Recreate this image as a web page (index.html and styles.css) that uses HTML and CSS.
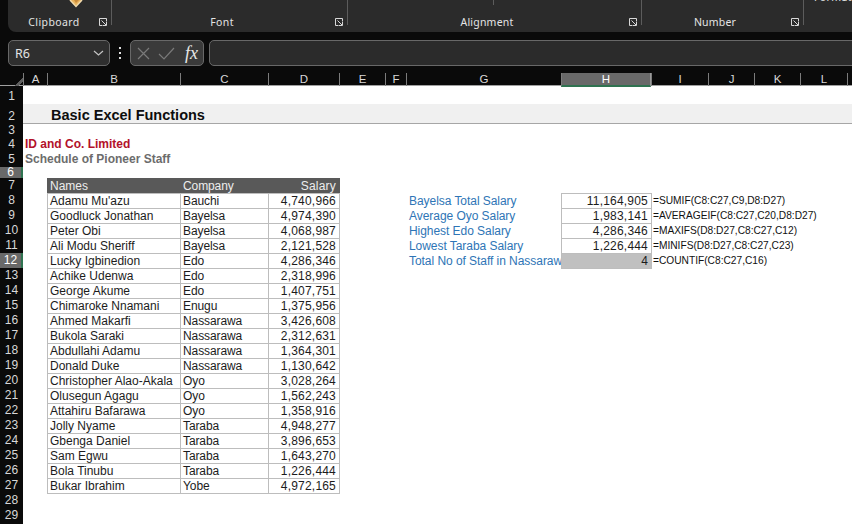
FILE: index.html
```html
<!DOCTYPE html>
<html lang="en">

<head>
    <meta charset="UTF-8">
    <meta name="viewport" content="width=device-width, initial-scale=1.0">
    <title>Basic Excel Functions</title>
    <link rel="stylesheet" href="styles.css">
</head>

<body>
    <div class="ribbon">
        <div class="group group-clipboard">
            <svg class="paste-icon" width="14" height="8" viewBox="0 0 14 8">
                <path d="M1 0 L7 6 L13 0 Z" fill="#e9b35c" />
                <path d="M1 0 L7 6.5 L13 0" fill="none" stroke="#f3dcae" stroke-width="1.5" />
                <path d="M5 0 L7 3 L10 0 Z" fill="#c98a3a" />
            </svg>
            <span class="group-label">Clipboard</span>
            <svg class="launcher" width="8" height="8" viewBox="0 0 8 8">
                <path d="M7.5 3.5 V0.5 H0.5 V7.5 H3.5 M2.5 2.5 L7 7 M7.5 4 V7.5 H4" fill="none" stroke="#d8d8d8" />
            </svg>
        </div>
        <div class="group group-font">
            <span class="group-label">Font</span>
            <svg class="launcher" width="8" height="8" viewBox="0 0 8 8">
                <path d="M7.5 3.5 V0.5 H0.5 V7.5 H3.5 M2.5 2.5 L7 7 M7.5 4 V7.5 H4" fill="none" stroke="#d8d8d8" />
            </svg>
        </div>
        <div class="group group-align">
            <i class="stub-line"></i>
            <span class="group-label">Alignment</span>
            <svg class="launcher" width="8" height="8" viewBox="0 0 8 8">
                <path d="M7.5 3.5 V0.5 H0.5 V7.5 H3.5 M2.5 2.5 L7 7 M7.5 4 V7.5 H4" fill="none" stroke="#d8d8d8" />
            </svg>
        </div>
        <div class="group group-number">
            <span class="group-label">Number</span>
            <svg class="launcher" width="8" height="8" viewBox="0 0 8 8">
                <path d="M7.5 3.5 V0.5 H0.5 V7.5 H3.5 M2.5 2.5 L7 7 M7.5 4 V7.5 H4" fill="none" stroke="#d8d8d8" />
            </svg>
        </div>
        <div class="group-styles">Formatting</div>
    </div>

    <div class="formula-bar">
        <div class="name-box">
            <span>R6</span>
            <svg width="11" height="6" viewBox="0 0 11 6">
                <path d="M1 1 L5.5 5 L10 1" fill="none" stroke="#c4c4c4" stroke-width="1.2" />
            </svg>
        </div>
        <div class="grip"><i></i><i></i><i></i></div>
        <div class="fx-box">
            <svg width="13" height="13" viewBox="0 0 13 13">
                <path d="M1 1 L12 12 M12 1 L1 12" stroke="#7a7a7a" stroke-width="1.2" />
            </svg>
            <svg width="17" height="13" viewBox="0 0 17 13">
                <path d="M1 7 L6 12 L16 1" fill="none" stroke="#7a7a7a" stroke-width="1.2" />
            </svg>
            <span class="fx">fx</span>
        </div>
        <div class="formula-input"></div>
    </div>

    <div class="col-heads">
        <div class="corner"></div>
        <div>A</div>
        <div>B</div>
        <div>C</div>
        <div>D</div>
        <div>E</div>
        <div>F</div>
        <div>G</div>
        <div class="active-col">H</div>
        <div>I</div>
        <div>J</div>
        <div>K</div>
        <div>L</div>
        <div></div>
    </div>

    <div class="row h18"><div class="rh">1</div></div>
    <div class="row h20 band"><div class="rh">2</div><div class="cell-b title">Basic Excel Functions</div></div>
    <div class="row h13"><div class="rh">3</div></div>
    <div class="row"><div class="rh">4</div><div class="cell-a company">ID and Co. Limited</div></div>
    <div class="row"><div class="rh">5</div><div class="cell-a schedule">Schedule of Pioneer Staff</div></div>
    <div class="row h11"><div class="rh active-row">6</div></div>

    <div class="row"><div class="rh">7</div><div class="cell-b td head">Names</div><div class="cell-c td head">Company</div><div class="cell-d td head num">Salary</div></div>
    <div class="row"><div class="rh">8</div><div class="cell-b td">Adamu Mu'azu</div><div class="cell-c td">Bauchi</div><div class="cell-d td num">4,740,966</div>
        <div class="cell-g label">Bayelsa Total Salary</div><div class="cell-h td num">11,164,905</div><div class="cell-i formula">=SUMIF(C8:C27,C9,D8:D27)</div></div>
    <div class="row"><div class="rh">9</div><div class="cell-b td">Goodluck Jonathan</div><div class="cell-c td">Bayelsa</div><div class="cell-d td num">4,974,390</div>
        <div class="cell-g label">Average Oyo Salary</div><div class="cell-h td num">1,983,141</div><div class="cell-i formula">=AVERAGEIF(C8:C27,C20,D8:D27)</div></div>
    <div class="row"><div class="rh">10</div><div class="cell-b td">Peter Obi</div><div class="cell-c td">Bayelsa</div><div class="cell-d td num">4,068,987</div>
        <div class="cell-g label">Highest Edo Salary</div><div class="cell-h td num">4,286,346</div><div class="cell-i formula">=MAXIFS(D8:D27,C8:C27,C12)</div></div>
    <div class="row"><div class="rh">11</div><div class="cell-b td">Ali Modu Sheriff</div><div class="cell-c td">Bayelsa</div><div class="cell-d td num">2,121,528</div>
        <div class="cell-g label">Lowest Taraba Salary</div><div class="cell-h td num">1,226,444</div><div class="cell-i formula">=MINIFS(D8:D27,C8:C27,C23)</div></div>
    <div class="row"><div class="rh active-row">12</div><div class="cell-b td">Lucky Igbinedion</div><div class="cell-c td">Edo</div><div class="cell-d td num">4,286,346</div>
        <div class="cell-g label">Total No of Staff in Nassarawa</div><div class="cell-h td num picked end">4</div><div class="cell-i formula">=COUNTIF(C8:C27,C16)</div></div>
    <div class="row"><div class="rh">13</div><div class="cell-b td">Achike Udenwa</div><div class="cell-c td">Edo</div><div class="cell-d td num">2,318,996</div></div>
    <div class="row"><div class="rh">14</div><div class="cell-b td">George Akume</div><div class="cell-c td">Edo</div><div class="cell-d td num">1,407,751</div></div>
    <div class="row"><div class="rh">15</div><div class="cell-b td">Chimaroke Nnamani</div><div class="cell-c td">Enugu</div><div class="cell-d td num">1,375,956</div></div>
    <div class="row"><div class="rh">16</div><div class="cell-b td">Ahmed Makarfi</div><div class="cell-c td">Nassarawa</div><div class="cell-d td num">3,426,608</div></div>
    <div class="row"><div class="rh">17</div><div class="cell-b td">Bukola Saraki</div><div class="cell-c td">Nassarawa</div><div class="cell-d td num">2,312,631</div></div>
    <div class="row"><div class="rh">18</div><div class="cell-b td">Abdullahi Adamu</div><div class="cell-c td">Nassarawa</div><div class="cell-d td num">1,364,301</div></div>
    <div class="row"><div class="rh">19</div><div class="cell-b td">Donald Duke</div><div class="cell-c td">Nassarawa</div><div class="cell-d td num">1,130,642</div></div>
    <div class="row"><div class="rh">20</div><div class="cell-b td">Christopher Alao-Akala</div><div class="cell-c td">Oyo</div><div class="cell-d td num">3,028,264</div></div>
    <div class="row"><div class="rh">21</div><div class="cell-b td">Olusegun Agagu</div><div class="cell-c td">Oyo</div><div class="cell-d td num">1,562,243</div></div>
    <div class="row"><div class="rh">22</div><div class="cell-b td">Attahiru Bafarawa</div><div class="cell-c td">Oyo</div><div class="cell-d td num">1,358,916</div></div>
    <div class="row"><div class="rh">23</div><div class="cell-b td">Jolly Nyame</div><div class="cell-c td">Taraba</div><div class="cell-d td num">4,948,277</div></div>
    <div class="row"><div class="rh">24</div><div class="cell-b td">Gbenga Daniel</div><div class="cell-c td">Taraba</div><div class="cell-d td num">3,896,653</div></div>
    <div class="row"><div class="rh">25</div><div class="cell-b td">Sam Egwu</div><div class="cell-c td">Taraba</div><div class="cell-d td num">1,643,270</div></div>
    <div class="row"><div class="rh">26</div><div class="cell-b td">Bola Tinubu</div><div class="cell-c td">Taraba</div><div class="cell-d td num">1,226,444</div></div>
    <div class="row"><div class="rh">27</div><div class="cell-b td end">Bukar Ibrahim</div><div class="cell-c td end">Yobe</div><div class="cell-d td num end">4,972,165</div></div>
    <div class="row"><div class="rh">28</div></div>
    <div class="row"><div class="rh">29</div></div>
    <div class="row"><div class="rh"></div></div>
</body>

</html>
```

FILE: styles.css
```css
* {
    padding: 0;
    margin: 0;
    box-sizing: border-box;
}

body {
    width: 852px;
    height: 524px;
    overflow: hidden;
    background-color: #0a0a0a;
    font-family: "Liberation Sans", Arial, sans-serif;
}

/* ribbon */

.ribbon {
    display: flex;
    height: 32px;
    margin-left: 8px;
    overflow: hidden;
    background-color: #2b2b2b;
    border-bottom-left-radius: 8px;
}

.group {
    position: relative;
    flex: none;
    display: flex;
    align-items: flex-start;
    height: 25px;
    padding-top: 15px;
    padding-right: 4px;
    border-right: 1px solid #5c5c5c;
}

.group-clipboard {
    width: 104px;
}

.group-font {
    width: 236px;
}

.group-align {
    width: 294px;
}

.group-number {
    width: 162px;
}

.group-label {
    flex: 1;
    padding-left: 1px;
    font-family: "Noto Sans", sans-serif;
    font-size: 10.5px;
    line-height: 14px;
    letter-spacing: 0.4px;
    text-align: center;
    color: #e4e4e4;
}

.group-font .group-label,
.group-align .group-label,
.group-number .group-label {
    padding-right: 4px;
}

.group-align .group-label {
    letter-spacing: 0.2px;
}

.group-number .group-label {
    letter-spacing: 0.2px;
}

.launcher {
    margin-top: 3px;
}

.paste-icon {
    position: absolute;
    left: 61px;
    top: 0;
}

.stub-line {
    position: absolute;
    left: 145px;
    top: 0;
    width: 1px;
    height: 5px;
    background-color: #5c5c5c;
}

.group-styles {
    flex: none;
    margin-top: -10px;
    padding-left: 10px;
    font-family: "Noto Sans", sans-serif;
    font-size: 10.5px;
    line-height: 14px;
    letter-spacing: 0.4px;
    color: #e4e4e4;
}

/* formula bar */

.formula-bar {
    display: flex;
    align-items: stretch;
    height: 26px;
    margin-top: 8px;
    padding-left: 8px;
}

.name-box {
    display: flex;
    align-items: center;
    justify-content: space-between;
    width: 102px;
    padding: 0 5px 0 6px;
    font-family: "Noto Sans", sans-serif;
    font-size: 12.5px;
    color: #e4e4e4;
    background-color: #2f2f2f;
    border: 1px solid #686868;
    border-radius: 5px;
}

.grip {
    display: flex;
    flex-direction: column;
    justify-content: center;
    gap: 3px;
    width: 20px;
    padding-left: 9px;
}

.grip i {
    width: 2px;
    height: 2px;
    background-color: #e0e0e0;
}

.fx-box {
    display: flex;
    align-items: center;
    width: 74px;
    padding-left: 6px;
    gap: 8px;
    background-color: #3a3a3a;
    border: 1px solid #686868;
    border-radius: 5px;
}

.fx {
    margin-left: 2px;
    font-family: "Liberation Serif", serif;
    font-style: italic;
    font-size: 18px;
    color: #e8e8e8;
}

.formula-input {
    flex: 1;
    margin-left: 5px;
    margin-right: -8px;
    background-color: #2b2b2b;
    border: 1px solid #686868;
    border-radius: 5px;
}

/* shared column widths for the headers and the rows */

.col-heads,
.row {
    display: grid;
    grid-template-columns: 23px 24px 133px 88px 71px 46px 21px 155px 90px 57px 46px 46px 47px 1fr;
}

.col-heads {
    height: 13px;
    margin-top: 7px;
    font-size: 11.5px;
    line-height: 12px;
    text-align: center;
    color: #d8d8d8;
    border-bottom: 1px solid #a0a0a0;
}

.col-heads div {
    border-left: 1px solid #7c7c7c;
}

.col-heads .corner {
    border-left: none;
    background: linear-gradient(135deg, transparent 76%, #5e5e5e 76%, #5e5e5e 88%, transparent 88%);
}

.col-heads .active-col {
    margin-bottom: -1px;
    color: #fff;
    background-color: #696969;
    border-bottom: 2px solid #2f7350;
    border-right: 1px solid #9a9a9a;
}

/* sheet rows */

.row {
    height: 15px;
    font-size: 12px;
    line-height: 14px;
    color: #1c1c1c;
    white-space: nowrap;
    background-color: #fff;
}

.h18 {
    height: 18px;
}

.h20 {
    height: 20px;
}

.h13 {
    height: 13px;
}

.h11 {
    height: 11px;
}

.band {
    background-color: #f0f0f0;
    border-bottom: 1px solid #a6a6a6;
}

.rh {
    grid-column: 1;
    font-size: 12px;
    line-height: 15px;
    text-align: center;
    color: #d8d8d8;
    background-color: #0a0a0a;
}

.h18 .rh {
    line-height: 20px;
}

.band .rh {
    line-height: 24px;
}

.h13 .rh {
    line-height: 12px;
}

.h11 .rh {
    line-height: 11px;
}

.active-row {
    color: #fff;
    background-color: #696969;
    border-right: 2px solid #2f7350;
}

.title {
    padding-left: 4px;
    font-size: 14.5px;
    font-weight: bold;
    line-height: 22px;
    color: #0d0d0d;
}

.company,
.schedule {
    padding-left: 2px;
    font-weight: bold;
    line-height: 15px;
}

.company {
    color: #b3112a;
}

.schedule {
    color: #6c6c6c;
}

.cell-a {
    grid-column: 2;
}

.cell-b {
    grid-column: 3;
}

.cell-c {
    grid-column: 4;
    letter-spacing: -0.1px;
}

.cell-d {
    grid-column: 5;
}

.cell-g {
    grid-column: 8;
}

.cell-h {
    grid-column: 9;
}

.cell-i {
    grid-column: 10;
}

.td {
    padding: 0 2px;
    border-left: 1px solid #bdbdbd;
    border-top: 1px solid #bdbdbd;
}

.num {
    margin-right: -1px;
    padding-right: 3px;
    letter-spacing: 0.2px;
    text-align: right;
    border-right: 1px solid #bdbdbd;
}

.end {
    height: 16px;
    border-bottom: 1px solid #bdbdbd;
}

.head {
    color: #ededed;
    background-color: #595959;
    border-color: #595959;
}

.label {
    overflow: hidden;
    padding-left: 3px;
    line-height: 16px;
    letter-spacing: -0.05px;
    color: #2e75b6;
}

.picked {
    background-color: #c0c0c0;
}

.formula {
    padding-left: 2px;
    font-size: 10.2px;
    line-height: 16px;
    color: #111;
}
```
